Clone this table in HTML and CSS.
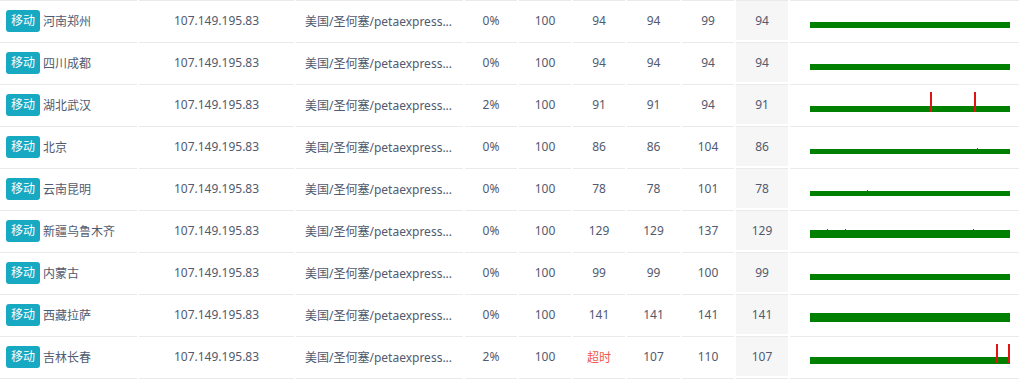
FILE: index.html
```html
<!DOCTYPE html>
<html lang="zh-CN">
<head>
<meta charset="utf-8">
<title>Ping</title>
<link rel="stylesheet" href="styles.css">
</head>
<body>
<div class="table">
  <div class="row">
    <div class="cell c-name"><span class="badge">移动</span><span class="city">河南郑州</span></div>
    <div class="cell c-ip">107.149.195.83</div>
    <div class="cell c-loc">美国/圣何塞/petaexpress...</div>
    <div class="cell num">0%</div><div class="cell num">100</div><div class="cell num">94</div><div class="cell num">94</div><div class="cell num">99</div><div class="cell num avg">94</div>
    <div class="cell chart"><svg width="200" height="20" viewBox="0 0 200 20"><rect x="0" y="14" width="200" height="6" fill="#008000"/></svg></div>
  </div>
  <div class="row">
    <div class="cell c-name"><span class="badge">移动</span><span class="city">四川成都</span></div>
    <div class="cell c-ip">107.149.195.83</div>
    <div class="cell c-loc">美国/圣何塞/petaexpress...</div>
    <div class="cell num">0%</div><div class="cell num">100</div><div class="cell num">94</div><div class="cell num">94</div><div class="cell num">94</div><div class="cell num avg">94</div>
    <div class="cell chart"><svg width="200" height="20" viewBox="0 0 200 20"><rect x="0" y="14" width="200" height="6" fill="#008000"/></svg></div>
  </div>
  <div class="row">
    <div class="cell c-name"><span class="badge">移动</span><span class="city">湖北武汉</span></div>
    <div class="cell c-ip">107.149.195.83</div>
    <div class="cell c-loc">美国/圣何塞/petaexpress...</div>
    <div class="cell num">2%</div><div class="cell num">100</div><div class="cell num">91</div><div class="cell num">91</div><div class="cell num">94</div><div class="cell num avg">91</div>
    <div class="cell chart"><svg width="200" height="20" viewBox="0 0 200 20"><rect x="0" y="14" width="200" height="6" fill="#008000"/><rect x="120" y="0" width="2" height="20" fill="#e01414"/><rect x="164" y="0" width="2" height="20" fill="#e01414"/></svg></div>
  </div>
  <div class="row">
    <div class="cell c-name"><span class="badge">移动</span><span class="city">北京</span></div>
    <div class="cell c-ip">107.149.195.83</div>
    <div class="cell c-loc">美国/圣何塞/petaexpress...</div>
    <div class="cell num">0%</div><div class="cell num">100</div><div class="cell num">86</div><div class="cell num">86</div><div class="cell num">104</div><div class="cell num avg">86</div>
    <div class="cell chart"><svg width="200" height="20" viewBox="0 0 200 20"><rect x="0" y="15" width="200" height="5" fill="#008000"/><rect x="167" y="14" width="1" height="1" fill="#008000"/></svg></div>
  </div>
  <div class="row">
    <div class="cell c-name"><span class="badge">移动</span><span class="city">云南昆明</span></div>
    <div class="cell c-ip">107.149.195.83</div>
    <div class="cell c-loc">美国/圣何塞/petaexpress...</div>
    <div class="cell num">0%</div><div class="cell num">100</div><div class="cell num">78</div><div class="cell num">78</div><div class="cell num">101</div><div class="cell num avg">78</div>
    <div class="cell chart"><svg width="200" height="20" viewBox="0 0 200 20"><rect x="0" y="15" width="200" height="5" fill="#008000"/><rect x="57" y="14" width="1" height="1" fill="#008000"/></svg></div>
  </div>
  <div class="row">
    <div class="cell c-name"><span class="badge">移动</span><span class="city">新疆乌鲁木齐</span></div>
    <div class="cell c-ip">107.149.195.83</div>
    <div class="cell c-loc">美国/圣何塞/petaexpress...</div>
    <div class="cell num">0%</div><div class="cell num">100</div><div class="cell num">129</div><div class="cell num">129</div><div class="cell num">137</div><div class="cell num avg">129</div>
    <div class="cell chart"><svg width="200" height="20" viewBox="0 0 200 20"><rect x="0" y="12" width="200" height="8" fill="#008000"/><rect x="17" y="11" width="1" height="1" fill="#008000"/><rect x="35" y="11" width="1" height="1" fill="#008000"/><rect x="163" y="11" width="1" height="1" fill="#008000"/></svg></div>
  </div>
  <div class="row">
    <div class="cell c-name"><span class="badge">移动</span><span class="city">内蒙古</span></div>
    <div class="cell c-ip">107.149.195.83</div>
    <div class="cell c-loc">美国/圣何塞/petaexpress...</div>
    <div class="cell num">0%</div><div class="cell num">100</div><div class="cell num">99</div><div class="cell num">99</div><div class="cell num">100</div><div class="cell num avg">99</div>
    <div class="cell chart"><svg width="200" height="20" viewBox="0 0 200 20"><rect x="0" y="14" width="200" height="6" fill="#008000"/></svg></div>
  </div>
  <div class="row">
    <div class="cell c-name"><span class="badge">移动</span><span class="city">西藏拉萨</span></div>
    <div class="cell c-ip">107.149.195.83</div>
    <div class="cell c-loc">美国/圣何塞/petaexpress...</div>
    <div class="cell num">0%</div><div class="cell num">100</div><div class="cell num">141</div><div class="cell num">141</div><div class="cell num">141</div><div class="cell num avg">141</div>
    <div class="cell chart"><svg width="200" height="20" viewBox="0 0 200 20"><rect x="0" y="11" width="200" height="9" fill="#008000"/></svg></div>
  </div>
  <div class="row">
    <div class="cell c-name"><span class="badge">移动</span><span class="city">吉林长春</span></div>
    <div class="cell c-ip">107.149.195.83</div>
    <div class="cell c-loc">美国/圣何塞/petaexpress...</div>
    <div class="cell num">2%</div><div class="cell num">100</div><div class="cell num timeout">超时</div><div class="cell num">107</div><div class="cell num">110</div><div class="cell num avg">107</div>
    <div class="cell chart"><svg width="200" height="20" viewBox="0 0 200 20"><rect x="0" y="13" width="200" height="7" fill="#008000"/><rect x="186" y="0" width="2" height="19" fill="#e01414"/><rect x="198" y="0" width="2" height="19" fill="#e01414"/></svg></div>
  </div>
  <div class="row row-end">
    <div class="cell"></div><div class="cell"></div><div class="cell"></div><div class="cell"></div><div class="cell"></div><div class="cell"></div><div class="cell"></div><div class="cell"></div><div class="cell"></div><div class="cell"></div>
  </div>
</div>
</body>
</html>
```
FILE: styles.css
```css
html, body {
  margin: 0;
  padding: 0;
  background: #ffffff;
  overflow: hidden;
}
body {
  font-family: "Noto Sans", "Noto Sans CJK SC", sans-serif;
  font-size: 12px;
  color: #515a6e;
}
.table {
  display: flex;
  flex-direction: column;
  gap: 2px;
  width: 1019px;
}
.row {
  display: grid;
  grid-template-columns: 137px 155px 167px 52px 52px 52px 53px 52px 52px 229px;
  column-gap: 2px;
}
.cell {
  box-sizing: border-box;
  height: 40px;
  border-top: 1px solid #e8eaec;
  display: flex;
  align-items: center;
  white-space: nowrap;
  overflow: hidden;
}
.row-end .cell {
  height: 1px;
}
.c-name {
  padding-left: 6px;
}
.badge {
  display: inline-block;
  background: #17a8c2;
  color: #ffffff;
  height: 22px;
  line-height: 22px;
  padding: 0 5px;
  border-radius: 3px;
  font-size: 12px;
}
.city {
  margin-left: 3px;
}
.c-ip {
  justify-content: center;
}
.c-loc {
  padding-left: 9px;
}
.num {
  justify-content: center;
}
.avg {
  background: #f6f6f7;
}
.timeout {
  color: #f0574a;
}
.chart {
  align-items: flex-start;
  padding-left: 20px;
  padding-top: 7px;
}
.chart svg {
  display: block;
}
```
